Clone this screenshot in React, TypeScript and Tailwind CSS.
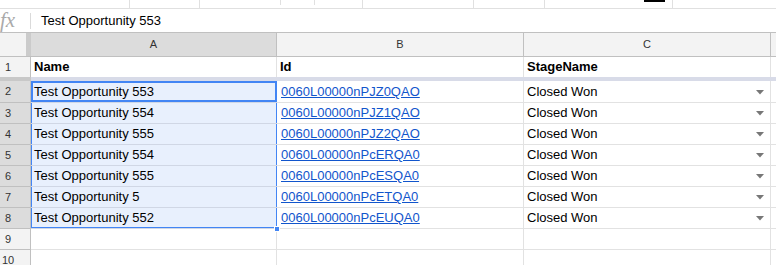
import React from 'react';

interface Row {
  n: number;
  name: string;
  id: string;
  stage: string;
}

const rows: Row[] = [
  { n: 2, name: 'Test Opportunity 553', id: '0060L00000nPJZ0QAO', stage: 'Closed Won' },
  { n: 3, name: 'Test Opportunity 554', id: '0060L00000nPJZ1QAO', stage: 'Closed Won' },
  { n: 4, name: 'Test Opportunity 555', id: '0060L00000nPJZ2QAO', stage: 'Closed Won' },
  { n: 5, name: 'Test Opportunity 554', id: '0060L00000nPcERQA0', stage: 'Closed Won' },
  { n: 6, name: 'Test Opportunity 555', id: '0060L00000nPcESQA0', stage: 'Closed Won' },
  { n: 7, name: 'Test Opportunity 5', id: '0060L00000nPcETQA0', stage: 'Closed Won' },
  { n: 8, name: 'Test Opportunity 552', id: '0060L00000nPcEUQA0', stage: 'Closed Won' },
];

const DropArrow = () => (
  <svg width="8" height="5" viewBox="0 0 8 5" className="shrink-0">
    <path d="M0 0h8L4 4.5z" fill="#777" />
  </svg>
);

// row number box: numbers sit left of centre, like the cropped sheet
const RowNum: React.FC<{ n: number; selected?: boolean }> = ({ n, selected }) => (
  <div
    className={`w-[31px] shrink-0 flex items-center border-r border-b border-[#c0c0c0] text-[11px] text-[#333] ${
      selected ? 'bg-[#dcdcdc]' : 'bg-[#f3f3f3]'
    }`}
  >
    <span className="w-[16px] text-center">{n}</span>
  </div>
);

export default function App() {
  return (
    <div className="w-[776px] h-[265px] overflow-hidden bg-white text-black font-['Liberation_Sans',Arial,sans-serif]">
      {/* leftover toolbar strip */}
      <div className="flex h-[9px] border-b border-[#e0e0e0]">
        <div className="w-[130px] border-r border-[#e0e0e0]" />
        <div className="w-[70px] border-r border-[#e0e0e0]" />
        <div className="w-[81px] flex justify-end"><div className="w-px h-[5px] bg-[#e0e0e0]" /></div>
        <div className="w-[34px] flex justify-end"><div className="w-px h-[5px] bg-[#e0e0e0]" /></div>
        <div className="w-[48px] border-r border-[#e0e0e0]" />
        <div className="w-[111px] border-r border-[#e0e0e0]" />
        <div className="w-[71px] border-r border-[#e0e0e0]" />
        <div className="w-[128px] border-r border-[#e0e0e0]">
          <div className="ml-[99px] w-[21px] h-[2px] bg-black" />
        </div>
        <div className="flex-1" />
      </div>

      {/* formula bar */}
      <div className="flex items-center h-[24px] border-b border-[#c0c0c0]">
        <div className="w-[30px] shrink-0 flex items-center h-full">
          <span className="italic text-[21px] leading-none text-[#aaa] font-['Liberation_Serif',serif] -mt-[1px]">fx</span>
        </div>
        <div className="w-px h-[16px] bg-[#dadada]" />
        <span className="pl-[10px] text-[13px]">Test Opportunity 553</span>
      </div>

      {/* column headers */}
      <div className="flex h-[24px] text-[11px] text-[#333]">
        <div className="w-[31px] shrink-0 flex border-b border-[#c0c0c0]">
          <div className="w-[26px] bg-[#f3f3f3]" />
          <div className="flex-1 bg-[#cbcbcb]" />
        </div>
        <div className="w-[246px] shrink-0 flex items-center justify-center bg-[#dcdcdc] border-r border-b border-[#c0c0c0]">A</div>
        <div className="w-[247px] shrink-0 flex items-center justify-center bg-[#f3f3f3] border-r border-b border-[#c0c0c0]">B</div>
        <div className="w-[247px] shrink-0 flex items-center justify-center bg-[#f3f3f3] border-r border-b border-[#c0c0c0]">C</div>
        <div className="flex-1 bg-[#f3f3f3] border-b border-[#c0c0c0]" />
      </div>

      {/* frozen header row */}
      <div className="flex h-[20px] text-[13px] font-bold">
        <div className="w-[31px] shrink-0 flex items-center border-r border-[#c0c0c0] bg-[#f3f3f3] text-[11px] font-normal text-[#333]">
          <span className="w-[16px] text-center">1</span>
        </div>
        <div className="w-[246px] shrink-0 flex items-center px-[3px] border-r border-[#e2e2e2]">Name</div>
        <div className="w-[247px] shrink-0 flex items-center px-[3px] border-r border-[#e2e2e2]">Id</div>
        <div className="w-[247px] shrink-0 flex items-center px-[3px] border-r border-[#e2e2e2]">StageName</div>
        <div className="flex-1" />
      </div>

      {/* freeze bar */}
      <div className="flex h-[4px]">
        <div className="w-[31px] shrink-0 bg-[#c8c8c8]" />
        <div className="flex-1 bg-[#d8dbe8]" />
      </div>

      {rows.map((r, i) => {
        const first = i === 0;
        const last = i === rows.length - 1;
        const sel = first
          ? 'shadow-[inset_2px_0_0_#4285f4,inset_-2px_0_0_#4285f4,inset_0_2px_0_#4285f4,inset_0_-2px_0_#4285f4]'
          : last
          ? 'shadow-[inset_1px_0_0_#4285f4,inset_-1px_0_0_#4285f4,inset_0_-1px_0_#4285f4]'
          : 'shadow-[inset_1px_0_0_#4285f4,inset_-1px_0_0_#4285f4]';
        return (
          <div key={r.n} className={`flex text-[13px] ${first ? 'h-[22px]' : 'h-[21px]'}`}>
            <RowNum n={r.n} selected />
            <div className={`relative w-[246px] shrink-0 flex items-center px-[3px] bg-[#e8f0fd] border-b border-[#d0d7e5] ${first ? 'pt-[1px]' : ''} ${sel}`}>
              {r.name}
              {last && (
                <div className="absolute -right-[3px] -bottom-[4px] w-[6px] h-[6px] bg-[#4285f4] border border-white z-10" />
              )}
            </div>
            <div className={`w-[247px] shrink-0 flex items-center pl-[4px] border-r border-b border-[#e2e2e2] ${first ? 'pt-[1px]' : ''}`}>
              <a href="#" className="text-[#1155cc] underline">{r.id}</a>
            </div>
            <div className={`w-[247px] shrink-0 flex items-center justify-between pl-[3px] pr-[6px] border-r border-b border-[#e2e2e2] ${first ? 'pt-[1px]' : ''}`}>
              <span>{r.stage}</span>
              <DropArrow />
            </div>
            <div className="flex-1 border-b border-[#e2e2e2]" />
          </div>
        );
      })}

      {[9, 10].map((n) => (
        <div key={n} className="flex h-[21px]">
          <RowNum n={n} />
          <div className="w-[246px] shrink-0 border-r border-b border-[#e2e2e2]" />
          <div className="w-[247px] shrink-0 border-r border-b border-[#e2e2e2]" />
          <div className="w-[247px] shrink-0 border-r border-b border-[#e2e2e2]" />
          <div className="flex-1 border-b border-[#e2e2e2]" />
        </div>
      ))}
    </div>
  );
}
